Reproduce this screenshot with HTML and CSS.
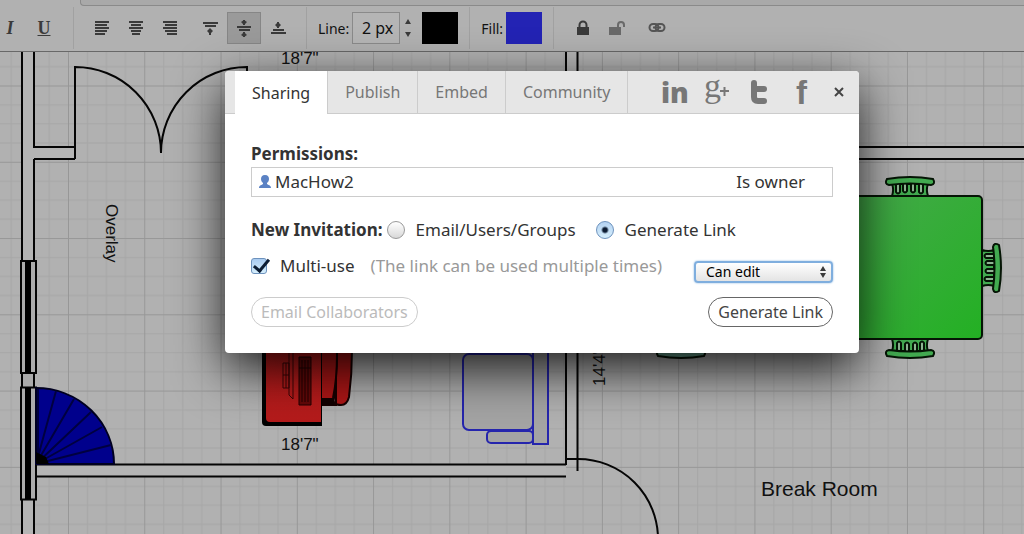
FILE: index.html
```html
<!DOCTYPE html>
<html lang="en">
<head>
    <meta charset="UTF-8">
    <meta name="viewport" content="width=device-width, initial-scale=1.0">
    <title>Floor Plan - Sharing</title>
    <link rel="stylesheet" href="styles.css">
</head>
<body>
    <div class="menu-strip"><div class="menu-panel"></div></div>
    <div class="toolbar">
        <div class="group group-font">
            <button class="tool italic" type="button">I</button>
            <button class="tool underline" type="button">U</button>
        </div>
        <div class="group group-align">
            <button class="tool" type="button" aria-label="Align left">
                <svg width="16" height="14" viewBox="0 0 16 14"><path d="M1 1h14M1 4h12M1 7h14M1 10h12M1 13h10"/></svg>
            </button>
            <button class="tool" type="button" aria-label="Align center">
                <svg width="16" height="14" viewBox="0 0 16 14"><path d="M1 1h14M3 4h10M1 7h14M3 10h10M4 13h8"/></svg>
            </button>
            <button class="tool" type="button" aria-label="Align right">
                <svg width="16" height="14" viewBox="0 0 16 14"><path d="M1 1h14M3 4h12M1 7h14M3 10h12M5 13h10"/></svg>
            </button>
            <button class="tool spaced" type="button" aria-label="Align top">
                <svg width="16" height="18" viewBox="0 0 16 18"><path d="M1 4h15M3 7h11M8 10v6"/><path class="solid" d="M5 12h6l-3-3zM5 12h6l-3 3z"/></svg>
            </button>
            <button class="tool active" type="button" aria-label="Align middle">
                <svg width="16" height="20" viewBox="0 0 16 20"><path d="M1 9h14M3 12h11M8 2v5M8 14v5"/><path class="solid" d="M5 4h6l-3 3zM5 4l3-2 3 2zM5 17h6l-3-3zM5 17l3 2 3-2z"/></svg>
            </button>
            <button class="tool" type="button" aria-label="Align bottom">
                <svg width="16" height="18" viewBox="0 0 16 18"><path d="M3 11h11M1 14h15M8 3v6"/><path class="solid" d="M5 6h6l-3 3zM5 6l3-3 3 3z"/></svg>
            </button>
        </div>
        <div class="group group-line">
            <label for="lineWidth">Line:</label>
            <input type="text" id="lineWidth" value="2 px">
            <div class="stepper">
                <button type="button" aria-label="Thicker"><svg width="6" height="5"><path class="solid" d="M0 5h6L3 0z"/></svg></button>
                <button type="button" aria-label="Thinner"><svg width="6" height="5"><path class="solid" d="M0 0h6L3 5z"/></svg></button>
            </div>
            <button class="swatch swatch-line" type="button" aria-label="Line color"></button>
        </div>
        <div class="group group-fill">
            <label for="fillColor">Fill:</label>
            <button class="swatch swatch-fill" id="fillColor" type="button"></button>
        </div>
        <div class="group last">
            <button class="tool" type="button" aria-label="Lock">
                <svg width="14" height="16" viewBox="0 0 14 16"><path class="solid" d="M1 7h12v8H1z"/><path d="M3.500 8V5a3.500 3.500 0 0 1 7 0v3"/></svg>
            </button>
            <button class="tool faded" type="button" aria-label="Unlock">
                <svg width="18" height="16" viewBox="0 0 18 16"><path class="solid" d="M1 7h12v8H1z"/><path d="M10 8V5a3 3 0 0 1 6 0v2"/></svg>
            </button>
            <button class="tool spaced link" type="button" aria-label="Link">
                <svg width="18" height="12" viewBox="0 0 18 12"><rect x="1.500" y="2" width="9" height="7" rx="3.500"/><rect x="7.500" y="2" width="9" height="7" rx="3.500"/><path d="M5 5.500h8"/></svg>
            </button>
        </div>
    </div>

    <div class="plan">
        <svg width="100%" height="100%">
            <defs>
                <pattern id="grid" x="68" y="85.500" width="76.270" height="76.270" patternUnits="userSpaceOnUse">
                    <path class="minor" d="M19.500 0v77M38.500 0v77M57.500 0v77M0 19.500h77M0 38.500h77M0 57.500h77"/>
                    <path class="major" d="M.5 0v77M0 .5h77"/>
                </pattern>
                <linearGradient id="tableFill" x1="0" y1="0" x2="1" y2="1">
                    <stop offset="0" stop-color="#46a94c"/>
                    <stop offset="1" stop-color="#23b023"/>
                </linearGradient>
                <linearGradient id="deskFill" x1="0" y1="0" x2="0" y2="1">
                    <stop offset="0" stop-color="#c11c1c"/>
                    <stop offset="1" stop-color="#b41b1b"/>
                </linearGradient>
                <g id="chair">
                    <path d="M-18 0C-17-3-16-7-18-12H18C16-7 17-3 18 0Z"/>
                    <path class="slats" d="M-14-12v8q2 3 4 0v-8M-7-12v7q2 3 4 0v-7M1-12v7q2 3 4 0v-7M9-12v8q2 3 4 0v-8"/>
                    <path d="M-23-17Q0-21 23-17Q26-12 21-11Q0-14-21-11Q-26-12-23-17Z"/>
                </g>
            </defs>
            <!-- drawn in window coordinates, toolbar included -->
            <g transform="translate(0 -52)">
                <rect width="100%" height="200%" fill="url(#grid)"/>

                <!-- walls -->
                <path class="wall" d="M22 52h12v95h41v12H34v375H22zM36 465h530v12H36zM566 52h12v413h-12zM578 147h2000v12H578z"/>
                <path class="line" d="M22 40v1000M34 40v107h41M34 159h41M34 159v881M36 464.500H566M36 476.500H566M566 40v425M577.500 40v431M578 147h2000M578 159h2000"/>
                <path class="line" d="M75 159V67A86 86 0 0 1 161 153A86 86 0 0 1 247 67V90"/>
                <path class="line" d="M566 459H578A80 80 0 0 1 658 539"/>

                <!-- windows -->
                <path class="window" d="M21 261h15v112H21zM22 373h12v14.500H22zM21 387.500h15v112H21z"/>
                <path fill="#000" d="M25 261h6v112h-6zM25 388h6v111h-6z"/>

                <!-- spiral stairs -->
                <path class="stairs" d="M36 464V388A78 76 0 0 1 114 464Z"/>
                <path class="steps" d="M36 464L56 391M36 464L74 399M36 464L91 412M36 464L102 427M36 464L111 445M38 464V389"/>
                <path fill="#000" d="M36 464v-12l10 5 3 7z"/>

                <!-- desk -->
                <path class="desk-seat" d="M320 300h16v105h-16zM336 300q3 55-2 98-2 7 7 7 6 0 8-8 6-45 0-97z"/>
                <path class="desk-seat" d="M333 300q8 60 0 98"/>
                <path fill="#110000" d="M322 398h12v7h-12z"/>
                <path fill="#000" d="M262 300v122q0 4 4 4h56V300z"/>
                <path fill="url(#deskFill)" d="M266 300v118q0 4 4 4h51V300z"/>
                <path fill="#650808" stroke="#200" d="M299 357h12v48h-12zM302 360v42M305 360v42M308 360v42M299 368h12"/>
                <path class="monitor" d="M283 363h6v25h-6zM289 350v45l4 4v-50M286 363v25M283 375h6"/>

                <!-- sofa -->
                <rect class="sofa" x="533" y="340" width="15" height="104"/>
                <rect class="sofa" x="487" y="431" width="46" height="12" rx="4"/>
                <rect class="sofa" x="463" y="354" width="70" height="76" rx="6"/>

                <!-- tables -->
                <g class="chairs">
                    <use href="#chair" transform="translate(910 196)"/>
                    <use href="#chair" transform="translate(910 339) rotate(180)"/>
                    <use href="#chair" transform="translate(982 268) rotate(90)"/>
                    <use href="#chair" class="teal" transform="translate(681 339) rotate(180)"/>
                </g>
                <rect class="table" x="838" y="196" width="144" height="143" rx="4"/>

                <text x="281" y="64">18'7"</text>
                <text x="281" y="450">18'7"</text>
                <text transform="translate(106 204) rotate(90)">Overlay</text>
                <text transform="translate(605 386) rotate(-90)">14'4"</text>
                <text class="room" x="761" y="496">Break Room</text>
            </g>
        </svg>
    </div>

    <div class="dialog">
        <div class="dialog-header">
            <div class="tabs">
                <button class="tab selected" type="button">Sharing</button>
                <button class="tab" type="button">Publish</button>
                <button class="tab" type="button">Embed</button>
                <button class="tab" type="button">Community</button>
            </div>
            <div class="social">
                <a href="#" aria-label="LinkedIn"><svg width="28" height="30"><text class="in" x="1" y="26">in</text></svg></a>
                <a href="#" aria-label="Google Plus"><svg width="28" height="30"><text class="g" x="1" y="20">g</text><path class="plus" d="M17 14h9M21.500 10v9"/></svg></a>
                <a href="#" aria-label="Twitter"><svg width="28" height="30"><path class="t" d="M8 6v14q0 4 4 4h6M8 12h10"/></svg></a>
                <a href="#" aria-label="Facebook"><svg width="28" height="30"><text class="f" x="7" y="27">f</text></svg></a>
            </div>
            <button class="close" type="button" aria-label="Close">
                <svg width="10" height="10"><path d="M1 1l8 8M9 1l-8 8"/></svg>
            </button>
        </div>
        <form class="dialog-body">
            <h3>Permissions:</h3>
            <div class="member">
                <svg width="14" height="14" viewBox="0 0 14 14"><path d="M7 0c3 0 4 2 4 4 0 2-1 3-2 4v1c1 1 4 1 4 4H1c0-3 3-3 4-4V8C4 7 3 6 3 4c0-2 1-4 4-4z"/></svg>
                <span class="name">MacHow2</span>
                <span class="role">Is owner</span>
            </div>
            <div class="row invite">
                <h3>New Invitation:</h3>
                <input type="radio" name="invite" id="inviteEmail">
                <label for="inviteEmail">Email/Users/Groups</label>
                <input type="radio" name="invite" id="inviteLink" checked>
                <label for="inviteLink">Generate Link</label>
            </div>
            <div class="row options">
                <input type="checkbox" id="multiUse" checked>
                <label for="multiUse">Multi-use</label>
                <span class="hint">(The link can be used multiple times)</span>
                <div class="select">
                    <select aria-label="Access">
                        <option>Can edit</option>
                        <option>Can view</option>
                    </select>
                    <svg width="6" height="12"><path class="solid" d="M0 5h6L3 0zM0 7h6l-3 5z"/></svg>
                </div>
            </div>
            <div class="row actions">
                <button type="button" disabled>Email Collaborators</button>
                <button type="button">Generate Link</button>
            </div>
        </form>
    </div>
</body>
</html>
```
FILE: styles.css
```css
* {
    box-sizing: border-box;
}
body {
    font-family: "Noto Sans", "Open Sans", sans-serif;
    font-size: 16px;
    color: #333;
    background-color: #b1b1b1;
    margin: 0;
    min-height: 100vh;
    display: flex;
    flex-direction: column;
    position: relative;
    overflow: hidden;
}
button,
input,
select {
    font-family: inherit;
    color: inherit;
    margin: 0;
    padding: 0;
}
button {
    background: none;
    border: none;
    cursor: pointer;
}

/* Toolbar */
.menu-strip {
    height: 6px;
    padding-left: 80px;
    background-color: #b1b1b1;
}
.menu-panel {
    height: 6px;
    background-color: #a9a9a9;
    border: 1px solid #8a8a8a;
    border-width: 0 0 1px 1px;
    border-radius: 0 0 0 4px;
}
.toolbar {
    height: 46px;
    padding: 1px 0 2px;
    display: flex;
    background-color: #b1b1b1;
    border-bottom: 1px solid #686868;
    font-size: 13px;
    color: #111;
}
.group {
    display: flex;
    align-items: center;
    padding: 0 12px;
    border-right: 1px solid #a1a1a1;
}
.group.last {
    border-right: none;
}
.group-font {
    margin-left: -7px;
    padding: 0 12px 0 0;
}
.group-align {
    padding: 0 11px;
}
.group-line label,
.group-fill label {
    margin-right: 3px;
    font-size: 14px;
}
.group-line,
.group-fill {
    padding: 0 11px;
}
.tool {
    width: 34px;
    height: 32px;
    flex: none;
    display: flex;
    align-items: center;
    justify-content: center;
    color: #3a3a3a;
}
.tool svg {
    fill: none;
    stroke: #3a3a3a;
    stroke-width: 2;
}
.solid {
    fill: #3a3a3a;
    stroke: none;
}
.spaced {
    margin-left: 6px;
}
.active {
    background-color: #9a9a9a;
    border: 1px solid #868686;
}
.italic,
.underline {
    font-family: "Liberation Serif", serif;
    font-size: 18px;
    font-weight: bold;
}
.italic {
    font-style: italic;
}
.underline {
    text-decoration: underline;
}
.faded {
    opacity: 0.6;
}
.link svg {
    stroke: #555;
}
#lineWidth {
    width: 48px;
    height: 32px;
    padding-right: 6px;
    text-align: right;
    font-size: 16px;
    background-color: #b5b5b5;
    border: 1px solid #8a8a8a;
}
.stepper {
    display: flex;
    flex-direction: column;
    gap: 8px;
    margin: 0 11px 0 5px;
}
.stepper button {
    display: flex;
}
.swatch {
    width: 36px;
    height: 32px;
}
.swatch-line {
    background-color: #000;
}
.swatch-fill {
    background-color: #2323b4;
}

/* Floor plan */
.plan {
    flex: 1;
    position: relative;
    overflow: hidden;
}
.plan svg {
    display: block;
    position: absolute;
}
.plan text {
    font-family: "Liberation Sans", sans-serif;
    font-size: 17px;
    fill: #111;
}
.plan .room {
    font-size: 21px;
}
.minor {
    stroke: #a6a6a6;
}
.major {
    stroke: #979797;
}
.wall {
    fill: #b5b5b5;
}
.line {
    fill: none;
    stroke: #050505;
    stroke-width: 2;
}
.window {
    fill: #acacac;
    stroke: #050505;
    stroke-width: 2;
}
.stairs {
    fill: #00008c;
    stroke: #000020;
    stroke-width: 2;
}
.steps {
    fill: none;
    stroke: #000040;
    stroke-width: 2;
}
.desk-seat {
    fill: #ad1616;
    stroke: #160000;
    stroke-width: 2;
}
.monitor {
    fill: none;
    stroke: #3c0505;
}
.sofa {
    fill: #a4a4a4;
    stroke: #2525ad;
    stroke-width: 2;
}
.chairs {
    fill: #42aa50;
    stroke: #051505;
    stroke-width: 2;
}
.slats {
    fill: #8fb593;
}
.teal {
    fill: #6fae98;
}
.table {
    fill: url(#tableFill);
    stroke: #051505;
    stroke-width: 2;
}

/* Sharing dialog */
.dialog {
    position: absolute;
    top: 71px;
    left: 225px;
    width: 634px;
    background-color: #fff;
    border-radius: 4px;
    box-shadow: 0 16px 50px rgba(0, 0, 0, 0.85);
}
.dialog-header {
    display: flex;
    align-items: center;
    height: 43px;
    padding-left: 10px;
    background-color: #e6e6e6;
    border-bottom: 1px solid #ccc;
    border-radius: 4px 4px 0 0;
}
.tabs {
    display: flex;
    align-self: stretch;
}
.tab {
    padding: 0 17px;
    font-size: 16px;
    color: #777;
    border-right: 1px solid #ccc;
}
.tab.selected {
    margin-bottom: -1px;
    background-color: #fff;
    color: #333;
}
.social {
    flex: 1;
    display: flex;
    justify-content: flex-end;
    gap: 15px;
    margin-right: 17px;
}
.social a {
    display: flex;
}
.social svg {
    fill: #777;
    overflow: visible;
}
.in {
    font-family: "Open Sans", sans-serif;
    font-size: 28px;
    font-weight: 800;
}
.g {
    font-family: "Liberation Serif", serif;
    font-size: 34px;
}
.f {
    font-family: "Liberation Sans", sans-serif;
    font-size: 33px;
    font-weight: bold;
}
.plus {
    stroke: #777;
    stroke-width: 2;
}
.t {
    fill: none;
    stroke: #777;
    stroke-width: 6;
    stroke-linecap: round;
}
.close {
    display: flex;
    margin-right: 15px;
}
.close svg {
    fill: none;
    stroke: #444;
    stroke-width: 2;
}
.dialog-body {
    padding: 28px 26px 26px;
    line-height: 24px;
    font-size: 17px;
}
h3 {
    margin: 0;
    font-size: 17px;
    line-height: 24px;
}
.member {
    display: flex;
    align-items: center;
    height: 30px;
    padding: 0 27px 0 6px;
    margin: 1px 0 21px;
    border: 1px solid #ccc;
}
.member svg {
    fill: #5b82c4;
    margin-right: 3px;
}
.name {
    flex: 1;
}
.row {
    display: flex;
}
.invite {
    align-items: center;
    margin-bottom: 12px;
}
.invite input {
    appearance: none;
    width: 18px;
    height: 18px;
    margin: 0 11px 0 4px;
    border: 1px solid #999;
    border-radius: 50%;
    background: linear-gradient(#fff, #d8d8d8);
}
.invite label + input {
    margin-left: 20px;
}
.invite input:checked {
    border-color: #6d92bd;
    background: radial-gradient(circle, #0c1c33 2px, transparent 4px), linear-gradient(#b5d3f2, #d5eefc);
}
.options {
    height: 29px;
    margin-bottom: 14px;
}
.options input {
    appearance: none;
    position: relative;
    width: 16px;
    height: 16px;
    margin: 4px 13px 0 0;
    border: 1px solid #6d92bd;
    border-radius: 3px;
    background: linear-gradient(#a9cbf0, #d5eefc);
}
.options input:checked::after {
    content: "";
    position: absolute;
    left: 5px;
    top: -3px;
    width: 6px;
    height: 13px;
    border: solid #0c1c33;
    border-width: 0 3px 3px 0;
    transform: rotate(40deg);
}
.hint {
    margin-left: 16px;
    color: #999;
}
.select {
    position: relative;
    align-self: flex-end;
    margin-left: auto;
    display: flex;
}
.select select {
    appearance: none;
    width: 139px;
    height: 22px;
    padding: 0 20px 0 10px;
    font-size: 14px;
    line-height: 18px;
    color: #000;
    border: 2px solid #7faede;
    border-radius: 4px;
    background: linear-gradient(#fff, #e4e4e4);
    box-shadow: 0 0 2px #7faede;
}
.select svg {
    position: absolute;
    right: 7px;
    top: 5px;
}
.actions {
    justify-content: space-between;
}
.actions button {
    height: 30px;
    padding: 0 9px;
    font-size: 16px;
    color: #444;
    border: 1px solid #666;
    border-radius: 15px;
}
.actions button:disabled {
    color: #bbb;
    border-color: #ccc;
}
```
